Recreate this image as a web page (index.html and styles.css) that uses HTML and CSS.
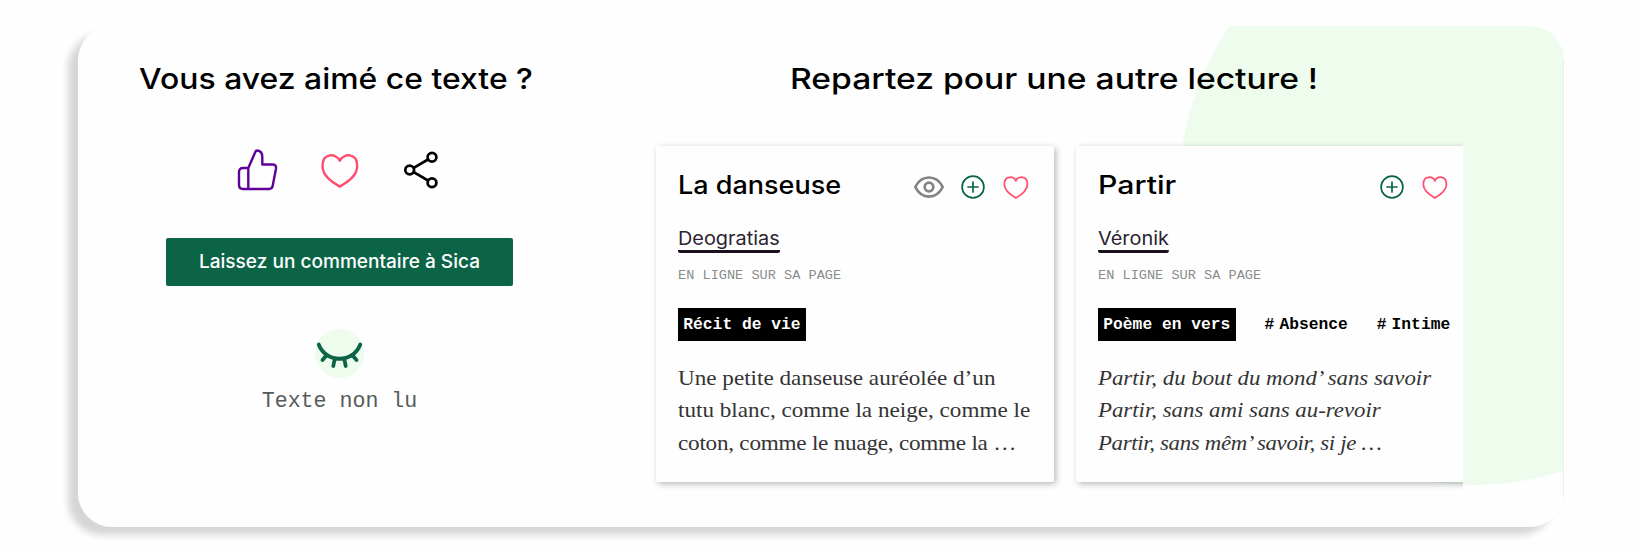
FILE: index.html
```html
<!DOCTYPE html>
<html lang="fr">
<head>
<meta charset="utf-8">
<title>Vous avez aimé ce texte ?</title>
<link rel="stylesheet" href="styles.css">
</head>
<body>
<svg width="0" height="0" class="defs">
  <symbol id="heart" viewBox="0 0 48 48"><path d="M23.8 14.7C20.5 7.3 6.5 6.2 6.5 20c0 9.500 8.500 15.500 17.300 20.600C32.600 35.500 41.200 29.500 41.200 20c0-13.800-14-12.700-17.400-5.300z"/></symbol>
  <symbol id="plus" viewBox="0 0 32 32"><circle cx="16" cy="16" r="10.900"/><path d="M16 11v10M11 16h10"/></symbol>
</svg>
<main class="panel">
  <div class="blob"></div>
  <section class="react">
    <h2 class="heading heading-like">Vous avez aimé ce texte ?</h2>
    <div class="actions">
      <svg class="icon thumb" viewBox="0 0 48 48"><path d="M14.300 22H9q-4 0-4 4v13q0 4 4 4h26q3.300 0 3.700-3.300l3.300-17q.5-4.200-3.500-4.200H28.300V11q0-6-5-6.500-1.500 0-2 1.500L14.300 22V43"/></svg>
      <svg class="icon like"><use href="#heart"/></svg>
      <svg class="icon share" viewBox="0 0 48 48"><circle cx="12.700" cy="24" r="4.400"/><circle cx="35" cy="11.300" r="4.400"/><circle cx="35" cy="36.700" r="4.400"/><path d="M16.700 21.800 31 13.500M16.700 26.200 31 34.500"/></svg>
    </div>
    <a class="comment"><span>Laissez un commentaire à Sica</span></a>
    <svg class="unread" viewBox="0 0 49 49"><circle cx="24.500" cy="24.500" r="24.500"/><path d="M3.700 15.500C11 34.500 38 34.500 45.300 15.500M10.500 27.500l-3 3.500M19.500 31l-1.200 6M29.500 31l1.200 6M38.500 27.500l3 3.500"/></svg>
    <p class="status">Texte non lu</p>
  </section>
  <section class="more">
    <h2 class="heading heading-more">Repartez pour une autre lecture !</h2>
    <div class="cards">
      <article class="card">
        <header class="top">
          <h3 class="title title-a">La danseuse</h3>
          <svg class="small eye" viewBox="0 0 32 32"><path d="M2.300 16C8.500 3.300 23.500 3.300 29.700 16 23.500 28.700 8.500 28.700 2.300 16z"/><circle cx="16" cy="16" r="4.300"/></svg>
          <svg class="small plus"><use href="#plus"/></svg>
          <svg class="small like"><use href="#heart"/></svg>
        </header>
        <a class="author">Deogratias</a>
        <p class="where">EN LIGNE SUR SA PAGE</p>
        <div class="tags"><span class="kind">Récit de vie</span></div>
        <p class="text">Une petite danseuse auréolée d’un<br>tutu blanc, comme la neige, comme le<br><span class="last">coton, comme le nuage, comme la …</span></p>
      </article>
      <article class="card">
        <header class="top">
          <h3 class="title title-b">Partir</h3>
          <svg class="small plus"><use href="#plus"/></svg>
          <svg class="small like"><use href="#heart"/></svg>
        </header>
        <a class="author">Véronik</a>
        <p class="where">EN LIGNE SUR SA PAGE</p>
        <div class="tags"><span class="kind">Poème en vers</span><span class="tag"><i>#</i>Absence</span><span class="tag"><i>#</i>Intime</span></div>
        <p class="text verse">Partir, du bout du mond’ sans savoir<br>Partir, sans ami sans au-revoir<br><span class="last">Partir, sans mêm’ savoir, si je …</span></p>
      </article>
    </div>
  </section>
</main>
</body>
</html>
```
FILE: styles.css
```css
* { box-sizing: border-box; }
body { margin: 0; height: 553px; padding: 26px 0 0 78px; background: #fefefe; font-family: Inter, "Liberation Sans", sans-serif; color: #000; }
h2, h3, p { margin: 0; font-weight: 500; }
svg { display: block; flex: none; fill: none; stroke-linecap: round; stroke-linejoin: round; }
.defs { position: absolute; }
.panel { position: relative; display: flex; width: 1486px; height: 501px; padding-top: 33px; background: #fefefe; border-radius: 34px; box-shadow: -10px 8px 7px #d6d6d6; overflow: hidden; }
.panel::after { content: ""; position: absolute; right: 0; top: 34px; width: 1px; height: 440px; background: #e0f6e1; }
.blob { position: absolute; left: 1101px; top: -129px; width: 588px; height: 588px; border-radius: 50%; background: #edfced; }
.react { position: relative; width: 523px; display: flex; flex-direction: column; align-items: center; }
.more { position: relative; width: 813px; margin-left: 49px; }
.heading { font-size: 29px; line-height: 40px; height: 40px; white-space: nowrap; }
.heading-like { margin-right: 6px; transform: scaleX(1.1); }
.heading-more { width: fit-content; margin-left: 140px; transform: scaleX(1.16); transform-origin: left; }
.actions { display: flex; gap: 33.500px; margin-top: 47px; }
.icon { width: 48px; height: 48px; stroke-width: 2.400; }
.thumb { stroke: #5f0099; }
.like { stroke: #ff4d6d; }
.share { stroke: #000; stroke-width: 2.700; }
.comment { width: 347px; height: 48px; margin-top: 44px; border-radius: 2px; background: #0b6446; color: #fefefe; font-size: 18.500px; font-weight: 500; line-height: 46px; text-align: center; white-space: nowrap; }
.comment span { display: inline-block; transform: scaleX(1.03); }
.unread { width: 49px; height: 49px; margin-top: 43px; stroke: #0b6446; stroke-width: 3.800; }
.unread circle { fill: #edfced; stroke: none; }
.status { margin-top: 11px; font: 21.600px/24px "Liberation Mono", monospace; color: #555b58; }
.cards { display: flex; gap: 22px; height: 370px; margin-top: 37px; padding: 10px 0 0 6px; overflow: hidden; }
.card { flex: none; width: 398px; height: 336px; padding: 23px 22px; background: #fefefe; border-radius: 2px; box-shadow: 2px 2px 6px rgba(0,0,0,.28); }
.card + .card .top { margin-right: 1px; }
.top { display: flex; align-items: center; gap: 11.500px; height: 36px; }
.title { font-size: 25px; line-height: 32px; align-self: flex-start; margin-right: auto; white-space: nowrap; transform-origin: left; }
.title-a { transform: scaleX(1.08); }
.title-b { transform: scaleX(1.21); }
.small { width: 32px; height: 32px; stroke-width: 1.600; }
.small.like { stroke-width: 2.600; }
.eye { stroke: #808482; stroke-width: 2.700; }
.plus { stroke: #0b6446; stroke-width: 1.700; }
.author { display: block; width: fit-content; margin-top: 21px; border-bottom: 3px solid #1c0f1e; border-radius: 2px; font-size: 18.500px; line-height: 24px; color: #2c2230; transform: scaleX(1.075); transform-origin: left; }
.where { margin-top: 12.500px; font: 13.600px/20px "Liberation Mono", monospace; color: #888d8a; }
.tags { display: flex; margin-top: 22px; font: bold 16.300px/33px "Liberation Mono", monospace; white-space: nowrap; }
.kind { padding: 0 5.300px; background: #000; color: #fefefe; }
.tag { margin-left: 29px; }
.tag i { font-style: normal; margin-right: 5px; }
.text { width: fit-content; margin-top: 21px; font: 22px/32.600px "Liberation Serif", serif; color: #343434; white-space: nowrap; transform: scaleX(1.052); transform-origin: left; }
.last { letter-spacing: -.22px; }
.verse { font-style: italic; transform: scaleX(1.038); }
.verse .last { letter-spacing: -.32px; }
```
